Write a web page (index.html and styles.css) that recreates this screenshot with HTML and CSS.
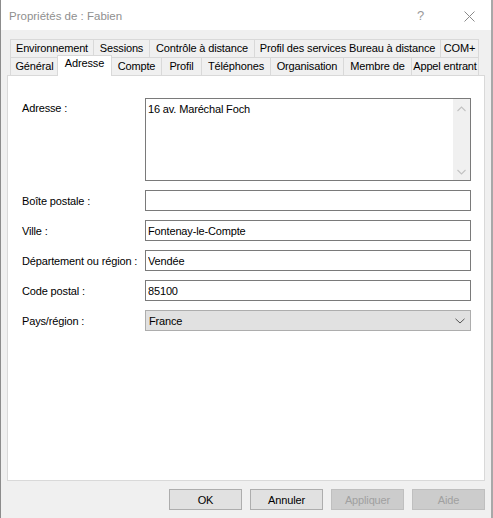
FILE: index.html
```html
<!DOCTYPE html>
<html lang="fr">
<head>
<meta charset="utf-8">
<title>Propriétés de : Fabien</title>
<link rel="stylesheet" href="styles.css">
</head>
<body>
<div class="window">
  <div class="titlebar">
    <span class="title">Propriétés de : Fabien</span>
    <span class="help">?</span>
    <span class="close">
      <svg width="11" height="11" viewBox="0 0 11 11"><path d="M0.5 0.5 L10.5 10.5 M10.5 0.5 L0.5 10.5" stroke="#8a8a8a" stroke-width="1" fill="none"/></svg>
    </span>
  </div>
  <div class="content">
    <div class="tabs">
      <div class="tabrow row-top">
        <div class="tab">Environnement</div>
        <div class="tab">Sessions</div>
        <div class="tab">Contrôle à distance</div>
        <div class="tab">Profil des services Bureau à distance</div>
        <div class="tab">COM+</div>
      </div>
      <div class="tabrow row-bottom">
        <div class="tab">Général</div>
        <div class="tab active">Adresse</div>
        <div class="tab">Compte</div>
        <div class="tab">Profil</div>
        <div class="tab">Téléphones</div>
        <div class="tab">Organisation</div>
        <div class="tab">Membre de</div>
        <div class="tab">Appel entrant</div>
      </div>
    </div>
    <div class="panel">
      <div class="form">
        <label class="label label-top">Adresse :</label>
        <div class="textarea">
          <div class="textarea-text">16 av. Maréchal Foch</div>
          <div class="scrollbar">
            <svg width="9" height="6" viewBox="0 0 9 6"><path d="M0.5 5 L4.5 1 L8.5 5" stroke="#c2c2c2" stroke-width="1.1" fill="none"/></svg>
            <svg width="9" height="6" viewBox="0 0 9 6"><path d="M0.5 1 L4.5 5 L8.5 1" stroke="#c2c2c2" stroke-width="1.1" fill="none"/></svg>
          </div>
        </div>

        <label class="label">Boîte postale :</label>
        <input class="field" type="text" value="">

        <label class="label">Ville :</label>
        <input class="field" type="text" value="Fontenay-le-Compte">

        <label class="label">Département ou région :</label>
        <input class="field" type="text" value="Vendée">

        <label class="label">Code postal :</label>
        <input class="field" type="text" value="85100">

        <label class="label">Pays/région :</label>
        <div class="select">
          <span>France</span>
          <svg width="10" height="6" viewBox="0 0 10 6"><path d="M0.5 0.8 L5 5 L9.5 0.8" stroke="#555" stroke-width="1" fill="none"/></svg>
        </div>
      </div>
    </div>
    <div class="buttons">
      <button class="btn">OK</button>
      <button class="btn">Annuler</button>
      <button class="btn" disabled>Appliquer</button>
      <button class="btn" disabled>Aide</button>
    </div>
  </div>
</div>
</body>
</html>
```

FILE: styles.css
```css
* { box-sizing: border-box; }

html, body {
  margin: 0;
  padding: 0;
  width: 493px;
  height: 518px;
  overflow: hidden;
  background: #ffffff;
}

body {
  font-family: "Liberation Sans", Arial, sans-serif;
  font-size: 11px;
  letter-spacing: -0.15px;
  color: #000;
}

.window {
  width: 493px;
  height: 518px;
  display: flex;
  flex-direction: column;
  border-left: 1px solid #8c8c8c;
  border-right: 2px solid #a8a8a8;
}

.titlebar {
  height: 30px;
  background: #fff;
  display: flex;
  align-items: center;
  padding-left: 8px;
}

.title {
  flex: 1;
  color: #8f8f8f;
  font-size: 11.5px;
  letter-spacing: 0;
  padding-top: 1px;
}

.help {
  color: #9a9a9a;
  font-size: 13px;
  width: 10px;
  margin-right: 37px;
  padding-top: 1px;
}

.close {
  display: flex;
  margin-right: 16px;
  padding-top: 3px;
}

.content {
  flex: 1;
  background: #f0f0f0;
  padding: 9px 6px 0 6px;
  display: flex;
  flex-direction: column;
}

.tabs {
  margin-left: 3px;
  width: 469px;
}

.tabrow {
  display: grid;
  height: 18px;
}

.row-top {
  grid-template-columns: 83px 56px 105px 186px 39px;
}

.row-bottom {
  grid-template-columns: 48px 53px 50px 40px 69px 73px 68px 68px;
}

.tab {
  border-top: 1px solid #d9d9d9;
  border-left: 1px solid #d9d9d9;
  text-align: center;
  line-height: 16px;
  white-space: nowrap;
  overflow: visible;
  background: #f0f0f0;
}

.tab:last-child {
  border-right: 1px solid #d9d9d9;
}

.tab.active {
  background: #fff;
  height: 21px;
  margin: -2px -1px 0 -1px;
  border-right: 1px solid #d9d9d9;
  position: relative;
  z-index: 1;
  line-height: 15px;
}

.panel {
  height: 406px;
  width: 478px;
  background: #fff;
  border: 1px solid #d9d9d9;
  padding: 22px 13px 0 14px;
}

.form {
  display: grid;
  grid-template-columns: 123px 326px;
  row-gap: 9px;
  align-items: center;
}

.label {
  white-space: nowrap;
}

.label-top {
  align-self: start;
  padding-top: 4px;
}

.textarea {
  height: 83px;
  border: 1px solid #7a7a7a;
  display: flex;
  background: #fff;
}

.textarea-text {
  flex: 1;
  padding: 4px 2px;
}

.scrollbar {
  width: 17px;
  background: #f0f0f0;
  display: flex;
  flex-direction: column;
  justify-content: space-between;
  align-items: center;
  padding: 7px 0 5px;
}

.field {
  height: 21px;
  border: 1px solid #7a7a7a;
  padding: 0 2px;
  margin: 0;
  font: inherit;
  letter-spacing: inherit;
  color: #000;
  background: #fff;
  outline: none;
}

.select {
  height: 21px;
  border: 1px solid #adadad;
  background: #e1e1e1;
  display: flex;
  align-items: center;
  justify-content: space-between;
  padding: 0 5px 0 3px;
}

.buttons {
  display: flex;
  justify-content: flex-end;
  gap: 8px;
  padding-top: 8px;
}

.btn {
  width: 73px;
  height: 21px;
  margin: 0;
  padding: 0;
  border: 1px solid #adadad;
  background: #e1e1e1;
  font: inherit;
  letter-spacing: inherit;
  color: #000;
}

.btn:disabled {
  background: #cccccc;
  border-color: #bfbfbf;
  color: #a0a0a0;
}
```
